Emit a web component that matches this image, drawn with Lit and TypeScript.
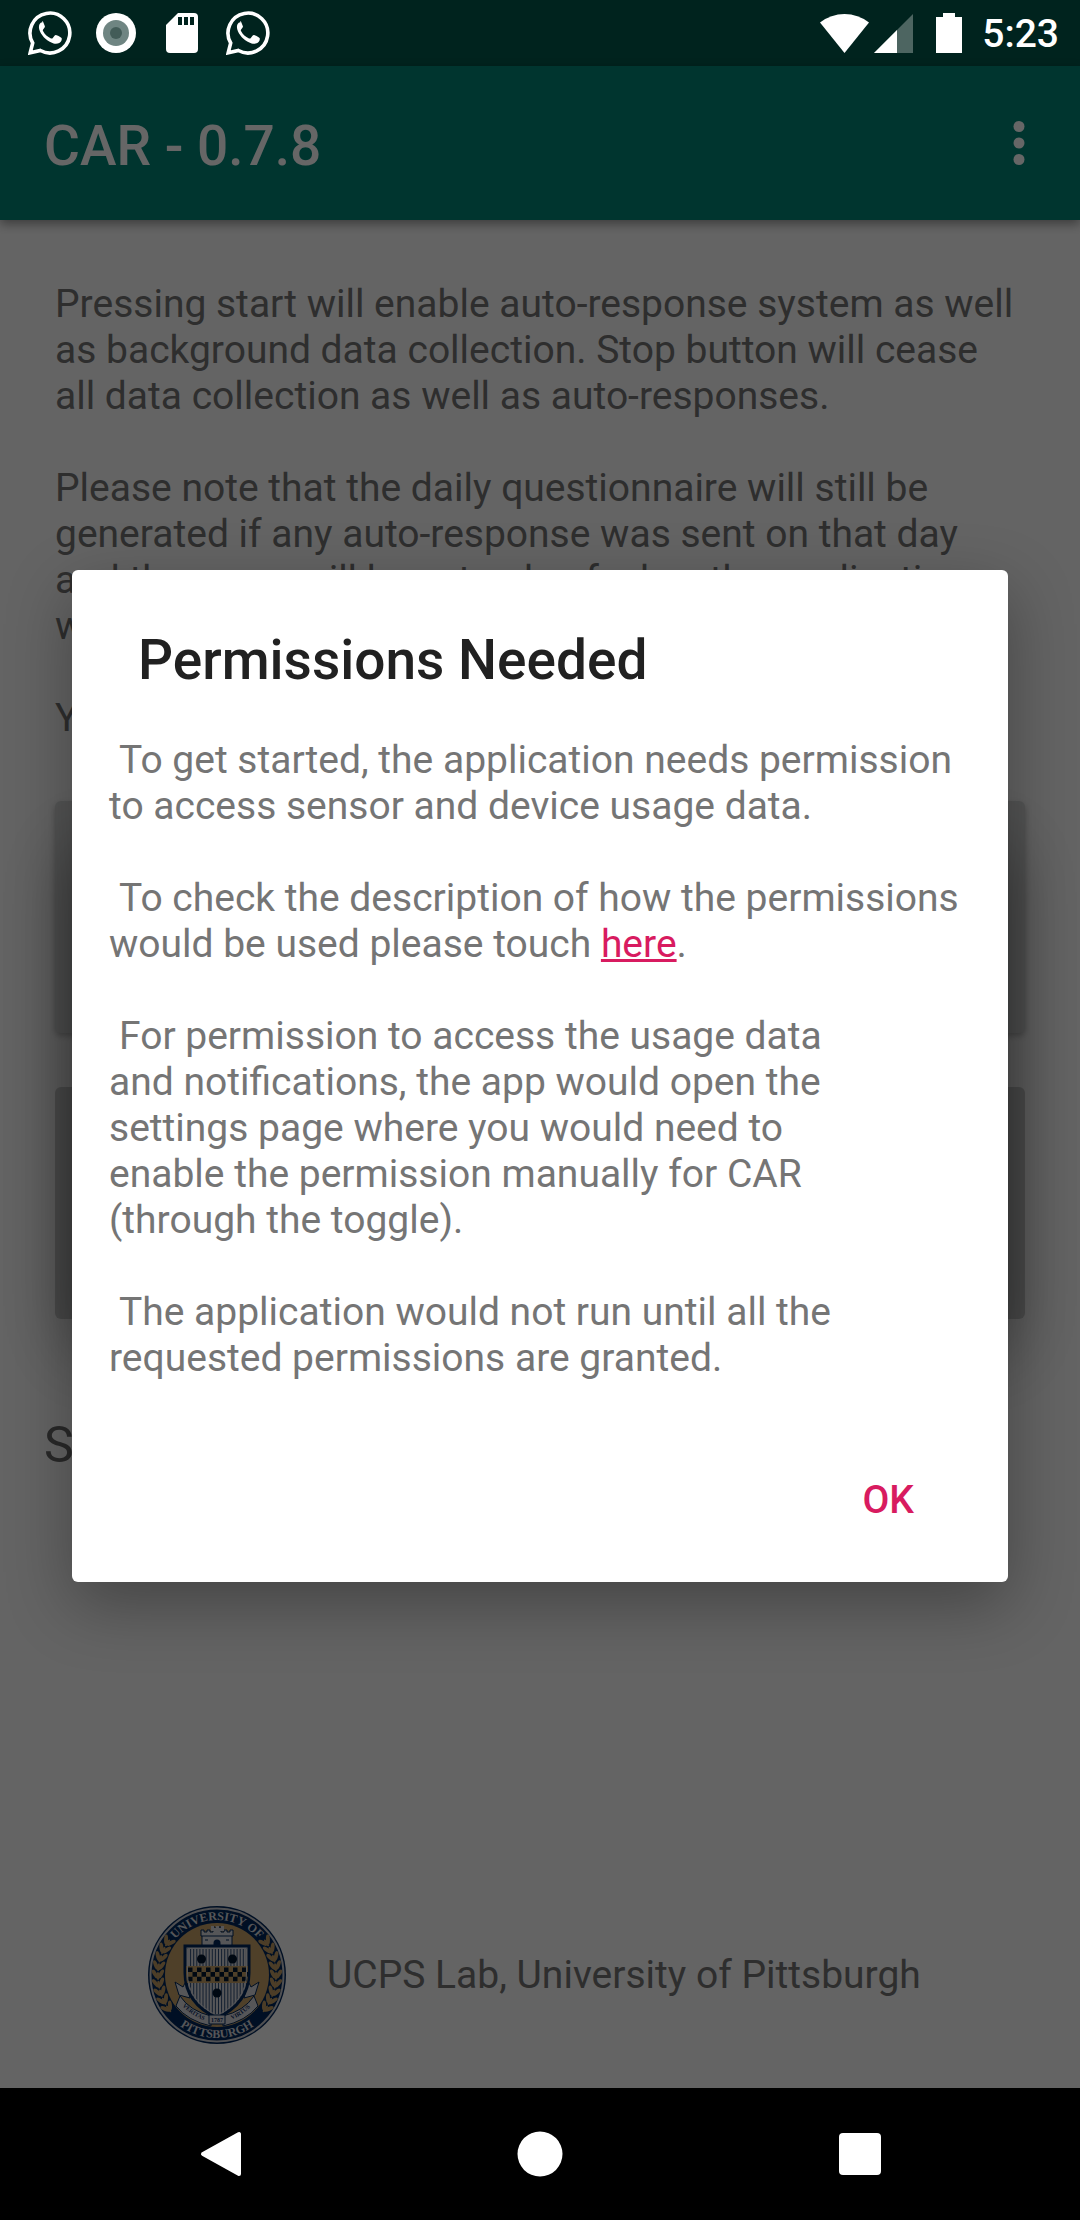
import { LitElement, html, css, svg } from "lit";
import { customElement } from "lit/decorators.js";

const range = (n: number) => Array.from({ length: n }, (_, i) => i);

const chatIcon = html`<svg class="chat" viewBox="0 0 44 44" aria-hidden="true">
  <path d="M2.2 41.8 4.7 32A19.9 19.9 0 1 1 12.400 39.500Z" fill="none" stroke="#fff" stroke-width="3.600" stroke-linejoin="miter"/>
  <path d="M14.500 11.300c-1-.2-2.300.6-3 2-.9 1.900-.7 4.500.4 7 2.700 5.900 7.600 10.200 13.700 12.200 3.300 1 6.800-.3 7.800-2.700.4-1 .5-2.200.2-2.700-.6-.8-4.500-2.900-5.600-3.100-.6-.1-1 .2-1.500.8l-1.900 2.400c-.5.5-.9.500-1.600.2-3.600-1.700-6.100-4-8-7.500-.3-.6-.3-1 .1-1.500l1.500-1.900c.4-.6.4-1 .2-1.600l-1.700-4.100c-.3-.8-.6-.9-1-.9Z" fill="#fff"/>
</svg>`;

@customElement("campus-seal")
export class CampusSeal extends LitElement {
  static styles = css`
    :host { display: block; width: 140px; height: 140px; }
    svg { display: block; width: 100%; height: 100%; }
    .ring { font: bold 12px "Liberation Serif", serif; fill: #d8d8dc; }
    .motto { font: bold 6px "Liberation Serif", serif; fill: #0b2a5c; }
  `;

  private wreath() {
    return range(9).map((i) => {
      const a = ((147 + i * 8.5) * Math.PI) / 180;
      const x = 70 + 59 * Math.cos(a);
      const y = 70 - 59 * Math.sin(a);
      const deg = 90 - (a * 180) / Math.PI;
      return svg`<g transform="translate(${x} ${y}) rotate(${deg + 90})" fill="#bd9a62">
        <ellipse cx="-3" cy="-2" rx="2" ry="5" transform="rotate(-30 -3 -2)"/>
        <ellipse cx="3" cy="-2" rx="2" ry="5" transform="rotate(30 3 -2)"/>
        <ellipse rx="1.300" ry="4"/>
      </g>`;
    });
  }

  render() {
    return html`<svg viewBox="0 0 140 140" role="img" aria-label="University of Pittsburgh seal">
      <defs>
        <path id="top" d="M15 70a55 55 0 0 1 110 0"/>
        <path id="bottom" d="M7 70a63 63 0 0 0 126 0"/>
        <path id="left" d="M32 97Q43 111 62 117"/>
        <path id="right" d="M78 117Q97 111 108 97"/>
        <clipPath id="shield"><path d="M39 43h62v25q0 29-31 44Q39 97 39 68Z"/></clipPath>
      </defs>
      <circle cx="70" cy="70" r="69" fill="#00275a"/>
      <circle cx="70" cy="70" r="66.500" fill="none" stroke="#c8c8cc" stroke-width="2"/>
      <circle cx="70" cy="70" r="52" fill="#c6a067"/>
      ${this.wreath()}
      <g transform="translate(140 0) scale(-1 1)">${this.wreath()}</g>
      <text class="ring"><textPath href="#top" startOffset="50%" text-anchor="middle">UNIVERSITY OF</textPath></text>
      <text class="ring"><textPath href="#bottom" startOffset="50%" text-anchor="middle">PITTSBURGH</textPath></text>
      <g fill="#d8d8dc" stroke="#00275a" stroke-width="1">
        <path d="M55 42V31h-1v-6h3v2h3v-2h3v2h3v-5h2v2h4v-2h2v5h3v-2h3v2h3v-2h3v6h-1v11Z"/>
        <path d="M64 31h12M55 31h9M76 31h9M58 35h3M79 35h3" fill="none"/>
      </g>
      <path d="M66.500 42v-4a3.500 3.500 0 0 1 7 0v4Z" fill="#00275a"/>
      <path d="M64 21h3v2h2v-2h3v2h2v-2h3v5H64Z" fill="#d8d8dc"/>
      <path d="M32 90 28 77l8 5 3-6 4 17ZM108 90l4-13-8 5-3-6-4 17Z" fill="#d8d8dc" stroke="#00275a"/>
      <path d="M33 91Q43 106 64 111v10Q41 116 29 101ZM107 91Q97 106 76 111v10Q99 116 111 101Z" fill="#d8d8dc" stroke="#00275a"/>
      <path d="M38 41h64v27q0 30-32 45Q38 98 38 68Z" fill="#d8d8dc" stroke="#00275a" stroke-width="3"/>
      <g clip-path="url(#shield)">
        ${range(20).map((i) => svg`<path d="M${40.5 + i * 3.1} 43v72" stroke="#00275a" stroke-width=".8"/>`)}
        <path d="M38 61h64v17H38Z" fill="#c6a067"/>
        ${range(42).map((i) => {
          const row = Math.floor(i / 14);
          const col = i % 14;
          return (row + col) % 2 === 0
            ? svg`<path d="M${41 + col * 4.5} ${62.5 + row * 4.6}h4.500v4.600h-4.500Z" fill="#00142e"/>`
            : null;
        })}
      </g>
      <path d="M40.500 43.500h59V68q0 28-29.500 42.500Q40.500 96 40.500 68Z" fill="none" stroke="#d8d8dc" stroke-width="1"/>
      <g fill="#00142e"><circle cx="54.500" cy="54" r="4.500"/><circle cx="85.500" cy="54" r="4.500"/><circle cx="70" cy="88" r="4.500"/></g>
      <path d="M62 110h16v9H62Z" fill="#d8d8dc" stroke="#00275a"/>
      <text class="motto"><textPath href="#left" startOffset="50%" text-anchor="middle">VERITAS</textPath></text>
      <text class="motto"><textPath href="#right" startOffset="50%" text-anchor="middle">VIRTUS</textPath></text>
      <text class="motto" x="70" y="117" text-anchor="middle">1787</text>
    </svg>`;
  }
}

@customElement("app-root")
export class AppRoot extends LitElement {
  static styles = css`
    :host {
      display: block;
      font-family: Roboto, "Liberation Sans", sans-serif;
      font-size: 39px;
      line-height: 46px;
    }
    * { box-sizing: border-box; }
    h1, h2, p { margin: 0; }
    button { border: 0; font: inherit; }
    svg { display: block; flex: none; }

    .screen {
      display: grid;
      grid-template-columns: 1fr;
      grid-template-rows: 66px 1fr 132px;
      min-height: 100vh;
      overflow: hidden;
      background: #646464;
    }
    .status {
      grid-area: 1 / 1;
      display: flex;
      align-items: center;
      padding: 0 21px 0 28px;
      background: #00231e;
      color: #fff;
    }
    .notices { display: flex; align-items: center; gap: 22px; flex: 1; }
    .chat { width: 44px; height: 44px; }
    .record { width: 40px; height: 40px; margin: 0 2px; }
    .card { width: 44px; height: 40px; }
    .signals { display: flex; align-items: center; }
    .wifi { width: 49px; height: 39px; margin-right: 5px; }
    .cell { width: 39px; height: 39px; margin-right: 23px; }
    .battery { width: 26px; height: 40px; margin-right: 20px; }
    .time { padding-top: 2px; font-weight: 500; }

    .app {
      grid-area: 2 / 1;
      display: flex;
      flex-direction: column;
      background: #fafafa;
      color: #737373;
    }
    .bar {
      display: flex;
      align-items: center;
      justify-content: space-between;
      height: 154px;
      padding: 0 28px 0 44px;
      background: #008577;
      color: #fff;
      box-shadow: 0 4px 10px rgba(0, 0, 0, 0.4);
    }
    .bar h1, .title { font-size: 55px; line-height: 64px; font-weight: 500; }
    .bar h1 { padding-top: 5px; }
    .more { padding: 0; background: none; }
    .more svg { width: 66px; height: 66px; }
    .content {
      display: flex;
      flex-direction: column;
      flex: 1;
      padding: 61px 55px 43px;
    }
    .intro { white-space: nowrap; }
    .actions { display: grid; gap: 54px; margin-top: 60px; }
    .action {
      height: 232px;
      border-radius: 6px;
      background: #d6d7d7;
      color: #212121;
      box-shadow: 0 3px 6px rgba(0, 0, 0, 0.25);
    }
    .action:disabled { background: #cacbcb; color: #a0a0a0; box-shadow: none; }
    .state { margin: 97px 0 0 -11px; font-size: 50px; line-height: 58px; color: #666; }
    .credit {
      display: flex;
      align-items: center;
      gap: 40px;
      margin-top: auto;
      padding-left: 92px;
    }

    .scrim {
      grid-area: 2 / 1;
      z-index: 1;
      display: grid;
      align-items: center;
      padding: 0 72px 2px;
      background: rgba(0, 0, 0, 0.6);
    }
    .dialog {
      position: relative;
      width: auto;
      margin: 0;
      padding: 58px 36px 36px 37px;
      border: 0;
      border-radius: 6px;
      background: #fff;
      color: #757575;
      box-shadow: 0 22px 66px rgba(0, 0, 0, 0.32);
    }
    .under {
      grid-area: 2 / 1;
      z-index: 1;
      align-self: center;
      height: 500px;
      margin: 0 72px;
      box-shadow: 0 22px 66px rgba(0, 0, 0, 0.4);
    }
    .title { padding-left: 29px; color: #212121; }
    .message { display: grid; gap: 46px; margin-top: 45px; }
    .message p { white-space: nowrap; text-indent: 10px; }
    .line { display: block; text-indent: 0; }
    a { color: #d81b60; }
    .buttons { display: flex; justify-content: flex-end; margin-top: 73px; padding-right: 14px; }
    .ok { padding: 23px 44px; background: none; color: #d81b60; font-weight: 500; }

    .nav {
      grid-area: 3 / 1;
      display: grid;
      grid-template-columns: repeat(3, 320px);
      justify-content: center;
      background: #000;
    }
    .nav button { display: grid; place-items: center; padding: 0; background: none; }
    .nav svg { width: 48px; height: 48px; }
  `;

  render() {
    return html`<div class="screen">
      <header class="status">
        <div class="notices">
          ${chatIcon}
          <svg class="record" viewBox="0 0 40 40" aria-hidden="true">
            <circle cx="20" cy="20" r="20" fill="#fff"/><circle cx="20" cy="20" r="13" fill="#6f8582"/><circle cx="20" cy="20" r="6" fill="#435c58"/>
          </svg>
          <svg class="card" viewBox="0 0 44 40" aria-hidden="true">
            <path d="M18 0h16a4 4 0 0 1 4 4v32a4 4 0 0 1-4 4H10a4 4 0 0 1-4-4V12Z" fill="#fff"/>
            <path d="M18 4h4v8h-4ZM24 4h4v8h-4ZM30 4h4v8h-4Z" fill="#00231e"/>
          </svg>
          ${chatIcon}
        </div>
        <div class="signals">
          <svg class="wifi" viewBox="0 0 49 39" aria-hidden="true"><path d="M0 8.500Q11 0 24.500 0T49 8.500L24.500 39Z" fill="#fff"/></svg>
          <svg class="cell" viewBox="0 0 39 39" aria-hidden="true"><path d="M39 0v39H0Z" fill="#4d6561"/><path d="M23 16v23H0Z" fill="#fff"/></svg>
          <svg class="battery" viewBox="0 0 26 40" aria-hidden="true"><path d="M7 0h12v4h7v36H0V4h7Z" fill="#fff"/></svg>
          <span class="time">5:23</span>
        </div>
      </header>

      <div class="app">
        <div class="bar">
          <h1>CAR - 0.7.8</h1>
          <button class="more" aria-label="More options">
            <svg viewBox="0 0 66 66"><g fill="#fff"><circle cx="33" cy="16.500" r="5.500"/><circle cx="33" cy="33" r="5.500"/><circle cx="33" cy="49.500" r="5.500"/></g></svg>
          </button>
        </div>
        <main class="content">
          <p class="intro">
            Pressing start will enable auto-response system as well<br />
            as background data collection. Stop button will cease<br />
            all data collection as well as auto-responses.<br /><br />
            Please note that the daily questionnaire will still be<br />
            generated if any auto-response was sent on that day<br />
            and the users will have to also feel as the application<br />
            was<br /><br />
            You
          </p>
          <div class="actions">
            <button class="action" aria-label="Start"></button>
            <button class="action" aria-label="Stop" disabled></button>
          </div>
          <p class="state">Status</p>
          <footer class="credit">
            <campus-seal></campus-seal>
            <span>UCPS Lab, University of Pittsburgh</span>
          </footer>
        </main>
      </div>

      <div class="under"></div>
      <div class="scrim">
        <dialog class="dialog" open aria-labelledby="title">
          <h2 class="title" id="title">Permissions Needed</h2>
          <div class="message">
            <p>To get started, the application needs permission<span class="line">to access sensor and device usage data.</span></p>
            <p>To check the description of how the permissions<span class="line">would be used please touch <a href="#permissions">here</a>.</span></p>
            <p>For permission to access the usage data<span class="line">and notifications, the app would open the<br />settings page where you would need to<br />enable the permission manually for CAR<br />(through the toggle).</span></p>
            <p>The application would not run until all the<span class="line">requested permissions are granted.</span></p>
          </div>
          <div class="buttons"><button class="ok">OK</button></div>
        </dialog>
      </div>

      <nav class="nav" aria-label="System">
        <button aria-label="Back"><svg viewBox="0 0 48 48"><path d="M43 4v40L7 24Z" fill="#fff" stroke="#fff" stroke-width="4" stroke-linejoin="round"/></svg></button>
        <button aria-label="Home"><svg viewBox="0 0 48 48"><circle cx="24" cy="24" r="22.500" fill="#fff"/></svg></button>
        <button aria-label="Recent apps"><svg viewBox="0 0 48 48"><rect x="3" y="3" width="42" height="42" rx="4" fill="#fff"/></svg></button>
      </nav>
    </div>`;
  }
}
